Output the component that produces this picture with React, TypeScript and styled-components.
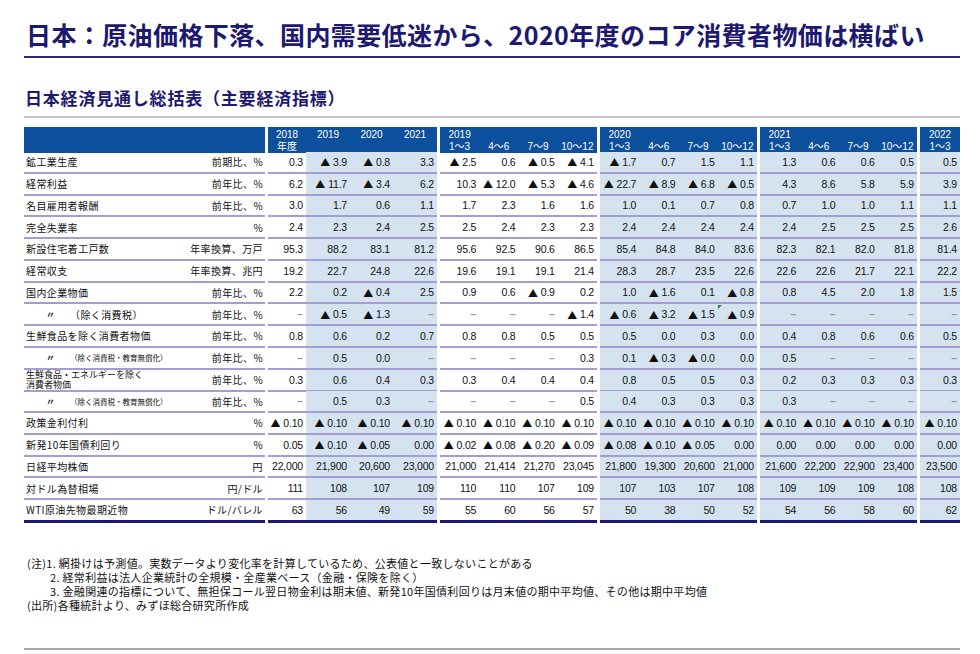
import styled, { createGlobalStyle } from "styled-components";

const navy = "#1d1870";
const headBlue = "#0c4f9c";
const shade = "#d4e3ef";
const rule = "#a49ed0";

const GlobalStyle = createGlobalStyle`
  body {
    margin: 0;
    background: #fff;
    font-family: "Noto Sans CJK JP", "Noto Sans", sans-serif;
    color: #1a1a1a;
  }
`;

const Page = styled.div`
  width: 936px;
  padding: 19px 20px 0 24px;
`;

const Title = styled.h1`
  margin: 0;
  padding: 0 0 7px 2px;
  font-size: 25px;
  line-height: 30px;
  font-weight: 700;
  letter-spacing: 0.4px;
  color: ${navy};
  border-bottom: 2px solid #2c2884;
  white-space: nowrap;
`;

const SubTitle = styled.h2`
  margin: 29px 0 0;
  padding: 0 0 7px 1px;
  font-size: 17px;
  line-height: 22px;
  font-weight: 700;
  letter-spacing: 0.8px;
  color: ${navy};
  border-bottom: 2px solid #c8c8c8;
`;

const Table = styled.div`
  margin-top: 9px;
  display: flex;
  flex-direction: column;
`;

const COLS = "241px 169px 157px 157px 157px 40px";

const HeadRow = styled.div`
  display: grid;
  grid-template-columns: ${COLS};
  column-gap: 3px;
  height: 25px;
`;

const HeadGroup = styled.div<{ $cols: string }>`
  background: ${headBlue};
  display: grid;
  grid-template-columns: ${(p) => p.$cols};
`;

const HeadCell = styled.div`
  display: flex;
  flex-direction: column;
  align-items: center;
  padding-top: 2px;
  font-family: "Liberation Sans", "Noto Sans CJK JP", sans-serif;
  font-size: 10px;
  line-height: 12px;
  color: #fff;
  white-space: nowrap;
`;

const BodyRow = styled.div<{ $last?: boolean }>`
  display: grid;
  grid-template-columns: ${COLS};
  column-gap: 3px;
  height: ${(p) => (p.$last ? "22.76px" : "21.76px")};
`;

const LabelGroup = styled.div<{ $last?: boolean }>`
  box-sizing: border-box;
  display: flex;
  align-items: center;
  justify-content: space-between;
  padding: 0 2px 0 2px;
  border-bottom: ${(p) => (p.$last ? `3px solid ${navy}` : `2px solid ${rule}`)};
  font-size: 10px;
  letter-spacing: 0.4px;
  white-space: nowrap;
  color: #111;
`;

const Label = styled.span<{ $indent?: boolean }>`
  display: flex;
  align-items: center;
  padding-left: ${(p) => (p.$indent ? "20px" : "0")};
`;

const Ditto = styled.span`
  font-size: 9px;
  font-weight: 700;
  width: 24px;
`;

const SubLabel = styled.span<{ $small?: boolean }>`
  font-size: ${(p) => (p.$small ? "7.5px" : "10px")};
  letter-spacing: ${(p) => (p.$small ? "0" : "0.4px")};
`;

const TwoLine = styled.span`
  font-size: 9px;
  line-height: 10px;
  letter-spacing: 0;
`;

const Unit = styled.span`
  text-align: right;
`;

const Group = styled.div<{ $cols: string; $last?: boolean }>`
  box-sizing: border-box;
  display: grid;
  grid-template-columns: ${(p) => p.$cols};
  border-bottom: ${(p) => (p.$last ? `3px solid ${navy}` : `2px solid ${rule}`)};
`;

const Cell = styled.div<{ $shade?: boolean; $flag?: boolean }>`
  position: relative;
  display: flex;
  align-items: center;
  justify-content: flex-end;
  padding-right: 3px;
  background: ${(p) => (p.$shade ? shade : "transparent")};
  font-family: "Liberation Sans", sans-serif;
  font-size: 10.5px;
  letter-spacing: -0.2px;
  white-space: nowrap;
  color: #111;

  ${(p) =>
    p.$flag
      ? `&::before {
    content: "";
    position: absolute;
    left: 0;
    top: 1px;
    border-top: 4px solid #1f8f2a;
    border-right: 4px solid transparent;
  }`
      : ""}
`;

const Tri = styled.span`
  font-family: "Noto Sans CJK JP", sans-serif;
  font-size: 10px;
  margin-right: 3px;
`;

const Dash = styled.span`
  color: #9a9a9a;
  font-weight: 700;
`;

const Notes = styled.div`
  margin-top: 33px;
  font-size: 11px;
  line-height: 14px;
  letter-spacing: 0.3px;
  padding-left: 3px;
  color: #111;
`;

const NoteLine = styled.div<{ $indent?: boolean }>`
  padding-left: ${(p) => (p.$indent ? "23px" : "0")};
  white-space: nowrap;
`;

const BottomRule = styled.div`
  margin-top: 36px;
  border-top: 2px solid #a8a8a8;
`;

type RowData = {
  label: string;
  unit: string;
  v: string;
  kind?: "ditto" | "dittoSmall" | "double";
  flag?: number;
};

const rows: RowData[] = [
  { label: "鉱工業生産", unit: "前期比、%", v: "0.3 ▲3.9 ▲0.8 3.3 ▲2.5 0.6 ▲0.5 ▲4.1 ▲1.7 0.7 1.5 1.1 1.3 0.6 0.6 0.5 0.5" },
  { label: "経常利益", unit: "前年比、%", v: "6.2 ▲11.7 ▲3.4 6.2 10.3 ▲12.0 ▲5.3 ▲4.6 ▲22.7 ▲8.9 ▲6.8 ▲0.5 4.3 8.6 5.8 5.9 3.9" },
  { label: "名目雇用者報酬", unit: "前年比、%", v: "3.0 1.7 0.6 1.1 1.7 2.3 1.6 1.6 1.0 0.1 0.7 0.8 0.7 1.0 1.0 1.1 1.1" },
  { label: "完全失業率", unit: "%", v: "2.4 2.3 2.4 2.5 2.5 2.4 2.3 2.3 2.4 2.4 2.4 2.4 2.4 2.5 2.5 2.5 2.6" },
  { label: "新設住宅着工戸数", unit: "年率換算、万戸", v: "95.3 88.2 83.1 81.2 95.6 92.5 90.6 86.5 85.4 84.8 84.0 83.6 82.3 82.1 82.0 81.8 81.4" },
  { label: "経常収支", unit: "年率換算、兆円", v: "19.2 22.7 24.8 22.6 19.6 19.1 19.1 21.4 28.3 28.7 23.5 22.6 22.6 22.6 21.7 22.1 22.2" },
  { label: "国内企業物価", unit: "前年比、%", v: "2.2 0.2 ▲0.4 2.5 0.9 0.6 ▲0.9 0.2 1.0 ▲1.6 0.1 ▲0.8 0.8 4.5 2.0 1.8 1.5" },
  { label: "（除く消費税）", unit: "前年比、%", kind: "ditto", flag: 11, v: "– ▲0.5 ▲1.3 – – – – ▲1.4 ▲0.6 ▲3.2 ▲1.5 ▲0.9 – – – – –" },
  { label: "生鮮食品を除く消費者物価", unit: "前年比、%", v: "0.8 0.6 0.2 0.7 0.8 0.8 0.5 0.5 0.5 0.0 0.3 0.0 0.4 0.8 0.6 0.6 0.5" },
  { label: "（除く消費税・教育無償化）", unit: "前年比、%", kind: "dittoSmall", v: "– 0.5 0.0 – – – – 0.3 0.1 ▲0.3 ▲0.0 0.0 0.5 – – – –" },
  { label: "生鮮食品・エネルギーを除く|消費者物価", unit: "前年比、%", kind: "double", v: "0.3 0.6 0.4 0.3 0.3 0.4 0.4 0.4 0.8 0.5 0.5 0.3 0.2 0.3 0.3 0.3 0.3" },
  { label: "（除く消費税・教育無償化）", unit: "前年比、%", kind: "dittoSmall", v: "– 0.5 0.3 – – – – 0.5 0.4 0.3 0.3 0.3 0.3 – – – –" },
  { label: "政策金利付利", unit: "%", v: Array(17).fill("▲0.10").join(" ") },
  { label: "新発10年国債利回り", unit: "%", v: "0.05 ▲0.10 ▲0.05 0.00 ▲0.02 ▲0.08 ▲0.20 ▲0.09 ▲0.08 ▲0.10 ▲0.05 0.00 0.00 0.00 0.00 0.00 0.00" },
  { label: "日経平均株価", unit: "円", v: "22,000 21,900 20,600 23,000 21,000 21,414 21,270 23,045 21,800 19,300 20,600 21,000 21,600 22,200 22,900 23,400 23,500" },
  { label: "対ドル為替相場", unit: "円/ドル", v: "111 108 107 109 110 110 107 109 107 103 107 108 109 109 109 108 108" },
  { label: "WTI原油先物最期近物", unit: "ドル/バレル", v: "63 56 49 59 55 60 56 57 50 38 50 52 54 56 58 60 62" },
];

type GroupDef = { cols: string; start: number; count: number; shaded: (i: number) => boolean; head: [string, string][] };

const quarters = ["1～3", "4～6", "7～9", "10～12"];
const qHead = (year: string): [string, string][] => quarters.map((q, i) => [i === 0 ? year : "\u00a0", q]);

const groups: GroupDef[] = [
  { cols: "38px 44px 43px 44px", start: 0, count: 4, shaded: (i) => i > 0, head: [["2018", "年度"], ["2019", ""], ["2020", ""], ["2021", ""]] },
  { cols: "repeat(4, 1fr)", start: 4, count: 4, shaded: () => false, head: qHead("2019") },
  { cols: "repeat(4, 1fr)", start: 8, count: 4, shaded: () => true, head: qHead("2020") },
  { cols: "repeat(4, 1fr)", start: 12, count: 4, shaded: () => true, head: qHead("2021") },
  { cols: "1fr", start: 16, count: 1, shaded: () => true, head: qHead("2022").slice(0, 1) },
];

function Value({ v }: { v: string }) {
  if (v === "–") return <Dash>–</Dash>;
  if (v.startsWith("▲"))
    return (
      <>
        <Tri>▲</Tri>
        {v.slice(1)}
      </>
    );
  return <>{v}</>;
}

function RowLabel({ row }: { row: RowData }) {
  if (row.kind === "ditto" || row.kind === "dittoSmall") {
    return (
      <Label $indent>
        <Ditto>〃</Ditto>
        <SubLabel $small={row.kind === "dittoSmall"}>{row.label}</SubLabel>
      </Label>
    );
  }
  if (row.kind === "double") {
    const [a, b] = row.label.split("|");
    return (
      <TwoLine>
        {a}
        <br />
        {b}
      </TwoLine>
    );
  }
  return <Label>{row.label}</Label>;
}

export default function App() {
  return (
    <Page>
      <GlobalStyle />
      <Title>日本：原油価格下落、国内需要低迷から、2020年度のコア消費者物価は横ばい</Title>
      <SubTitle>日本経済見通し総括表（主要経済指標）</SubTitle>

      <Table>
        <HeadRow>
          <HeadGroup $cols="1fr" />
          {groups.map((g, gi) => (
            <HeadGroup key={gi} $cols={g.cols}>
              {g.head.map(([a, b], i) => (
                <HeadCell key={i}>
                  <span>{a}</span>
                  <span>{b}</span>
                </HeadCell>
              ))}
            </HeadGroup>
          ))}
        </HeadRow>

        {rows.map((row, ri) => {
          const last = ri === rows.length - 1;
          const vals = row.v.split(" ");
          return (
            <BodyRow key={ri} $last={last}>
              <LabelGroup $last={last}>
                <RowLabel row={row} />
                <Unit>{row.unit}</Unit>
              </LabelGroup>
              {groups.map((g, gi) => (
                <Group key={gi} $cols={g.cols} $last={last}>
                  {vals.slice(g.start, g.start + g.count).map((v, i) => (
                    <Cell key={i} $shade={g.shaded(i)} $flag={row.flag === g.start + i}>
                      <Value v={v} />
                    </Cell>
                  ))}
                </Group>
              ))}
            </BodyRow>
          );
        })}
      </Table>

      <Notes>
        <NoteLine>(注)1. 網掛けは予測値。実数データより変化率を計算しているため、公表値と一致しないことがある</NoteLine>
        <NoteLine $indent>2. 経常利益は法人企業統計の全規模・全産業ベース（金融・保険を除く）</NoteLine>
        <NoteLine $indent>3. 金融関連の指標について、無担保コール翌日物金利は期末値、新発10年国債利回りは月末値の期中平均値、その他は期中平均値</NoteLine>
        <NoteLine>(出所)各種統計より、みずほ総合研究所作成</NoteLine>
      </Notes>
      <BottomRule />
    </Page>
  );
}
